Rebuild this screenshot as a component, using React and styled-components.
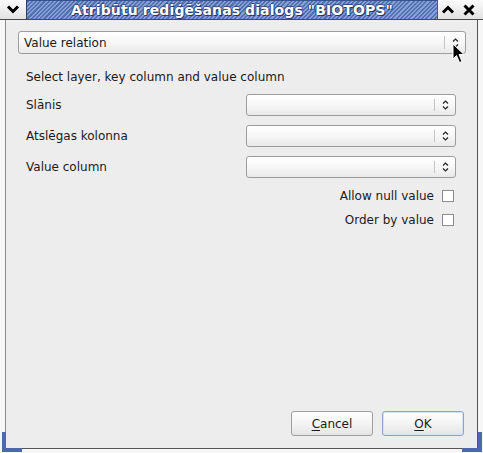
import React from 'react';
import styled, { createGlobalStyle } from 'styled-components';

const GlobalStyle = createGlobalStyle`
  html, body {
    margin: 0;
    padding: 0;
    background: #ededed;
  }
  body {
    font-family: "DejaVu Sans", "Liberation Sans", sans-serif;
    font-size: 12px;
    color: #1a1a1a;
  }
`;

const Window = styled.div`
  position: relative;
  width: 483px;
  height: 453px;
  display: flex;
  flex-direction: column;
  background: #f4f4f4;
  overflow: hidden;
`;

const TitleBar = styled.div`
  display: flex;
  height: 20px;
  flex-shrink: 0;
  border-bottom: 1px solid #4a4a4a;
  box-sizing: border-box;
`;

const FrameButton = styled.div`
  width: ${(p) => p.$w}px;
  display: flex;
  align-items: center;
  justify-content: center;
  background: linear-gradient(#fbfbfb, #e2e2e2);
  border-left: ${(p) => (p.$edge ? '1px solid #5a5a5a' : 'none')};
  box-sizing: border-box;
`;

const Caption = styled.div`
  flex: 1;
  display: flex;
  align-items: center;
  justify-content: center;
  border-left: 1px solid #2c3f6a;
  border-top: 1px solid #3a5290;
  background: repeating-linear-gradient(
    135deg,
    #5170b0 0px,
    #5170b0 1.5px,
    #86a0d6 1.5px,
    #86a0d6 3px
  );
  color: #fff;
  font-weight: bold;
  font-size: 14px;
  letter-spacing: 0.1px;
  text-shadow: 1px 1px 0 #243764, -1px 0 0 #314a85, 0 -1px 0 #314a85;
  white-space: nowrap;
`;

const Frame = styled.div`
  flex: 1;
  display: flex;
  padding: 0 5px 4px 5px;
  background: #f6f6f6;
  position: relative;
`;

const Body = styled.div`
  flex: 1;
  display: flex;
  flex-direction: column;
  padding: 11px 11px 12px 12px;
  background: #ededed;
  border-left: 1px solid #8c8c8c;
  border-right: 1px solid #555;
  border-bottom: 1px solid #555;
`;

const Corner = styled.div`
  position: absolute;
  bottom: ${(p) => p.$bottom}px;
  ${(p) => p.$side}: ${(p) => p.$offset}px;
  width: ${(p) => p.$w}px;
  height: ${(p) => p.$h}px;
  background: #4d68ae;
`;

const ComboBox = styled.div`
  height: ${(p) => p.$h || 22}px;
  box-sizing: border-box;
  display: flex;
  align-items: center;
  border: 1px solid #9d9d9d;
  border-radius: 3px;
  background: linear-gradient(#ffffff 0%, #f7f7f7 50%, #e9e9e9 100%);
  padding-left: 5px;
`;

const ComboText = styled.span`
  flex: 1;
`;

const ComboArrow = styled.div`
  width: 20px;
  height: 60%;
  display: flex;
  align-items: center;
  justify-content: center;
  border-left: 1px solid #c4c4c4;
`;

const Section = styled.div`
  padding: 0 10px 0 8px;
  display: flex;
  flex-direction: column;
`;

const Intro = styled.div`
  margin-top: 16px;
  line-height: 14px;
`;

const FormGrid = styled.div`
  margin-top: 10px;
  display: grid;
  grid-template-columns: 1fr 210px;
  row-gap: 9px;
  align-items: center;
`;

const CheckRow = styled.label`
  height: 24px;
  display: flex;
  align-items: center;
  justify-content: flex-end;
  gap: 8px;
  padding-right: 2px;
  &:first-of-type {
    margin-top: 6px;
  }
`;

const CheckBox = styled.span`
  width: 12px;
  height: 12px;
  box-sizing: border-box;
  border: 1px solid #8a8a8a;
  background: #fff;
`;

const Footer = styled.div`
  margin-top: auto;
  display: flex;
  justify-content: flex-end;
  gap: 9px;
  padding-right: 2px;
`;

const Button = styled.button`
  width: 82px;
  height: 25px;
  border: 1px solid ${(p) => (p.$focus ? '#8aa4cf' : '#a0a0a0')};
  border-radius: 3px;
  background: linear-gradient(#ffffff 0%, #f4f4f4 50%, #e4e4e4 100%);
  font-family: inherit;
  font-size: 12px;
  color: #1a1a1a;
  padding: 0;
  box-shadow: ${(p) => (p.$focus ? 'inset 0 0 0 1px #d6e2f5' : 'none')};
  u {
    text-decoration: underline;
    text-underline-offset: 2px;
  }
`;

const Pointer = styled.svg`
  position: absolute;
  left: 452px;
  top: 43px;
`;

const Chevron = ({ up }) => (
  <svg width="14" height="9" viewBox="0 0 14 9">
    <path
      d={up ? 'M2 7.5 L7 2.5 L12 7.5' : 'M2 1.5 L7 6.5 L12 1.5'}
      fill="none"
      stroke="#000"
      strokeWidth="3"
    />
  </svg>
);

const CloseGlyph = () => (
  <svg width="12" height="12" viewBox="0 0 12 12">
    <path d="M1.5 1.5 L10.5 10.5 M10.5 1.5 L1.5 10.5" stroke="#000" strokeWidth="3" />
  </svg>
);

const UpDown = () => (
  <svg width="7" height="12" viewBox="0 0 7 12">
    <path d="M1 4.5 L3.5 2 L6 4.5 M1 7.5 L3.5 10 L6 7.5" fill="none" stroke="#222" strokeWidth="1.2" />
  </svg>
);

const Combo = ({ text, h }) => (
  <ComboBox $h={h}>
    <ComboText>{text}</ComboText>
    <ComboArrow>
      <UpDown />
    </ComboArrow>
  </ComboBox>
);

const rows = ['Slānis', 'Atslēgas kolonna', 'Value column'];

export default function App() {
  return (
    <>
      <GlobalStyle />
      <Window>
        <TitleBar>
          <FrameButton $w={26}>
            <Chevron />
          </FrameButton>
          <Caption>Atribūtu rediģēšanas dialogs &quot;BIOTOPS&quot;</Caption>
          <FrameButton $w={21} $edge>
            <Chevron up />
          </FrameButton>
          <FrameButton $w={22}>
            <CloseGlyph />
          </FrameButton>
          <FrameButton $w={3} />
        </TitleBar>
        <Frame>
          <Body>
            <Combo text="Value relation" h={23} />
            <Section>
              <Intro>Select layer, key column and value column</Intro>
              <FormGrid>
                {rows.map((r) => (
                  <React.Fragment key={r}>
                    <span>{r}</span>
                    <Combo text="" />
                  </React.Fragment>
                ))}
              </FormGrid>
              <CheckRow>
                Allow null value
                <CheckBox />
              </CheckRow>
              <CheckRow>
                Order by value
                <CheckBox />
              </CheckRow>
            </Section>
            <Footer>
              <Button>
                <u>C</u>ancel
              </Button>
              <Button $focus>
                <u>O</u>K
              </Button>
            </Footer>
          </Body>
          <Corner $side="left" $offset={2} $bottom={1} $w={20} $h={4} />
          <Corner $side="left" $offset={2} $bottom={1} $w={4} $h={20} />
          <Corner $side="right" $offset={1} $bottom={1} $w={20} $h={4} />
          <Corner $side="right" $offset={1} $bottom={1} $w={4} $h={20} />
        </Frame>
        <Pointer width="14" height="21" viewBox="0 0 14 21">
          <path
            d="M1 1 L1 16 L4.5 12.5 L7.5 19.5 L10 18.5 L7 11.5 L12 11.5 Z"
            fill="#000"
            stroke="#fff"
            strokeWidth="1"
          />
        </Pointer>
      </Window>
    </>
  );
}
